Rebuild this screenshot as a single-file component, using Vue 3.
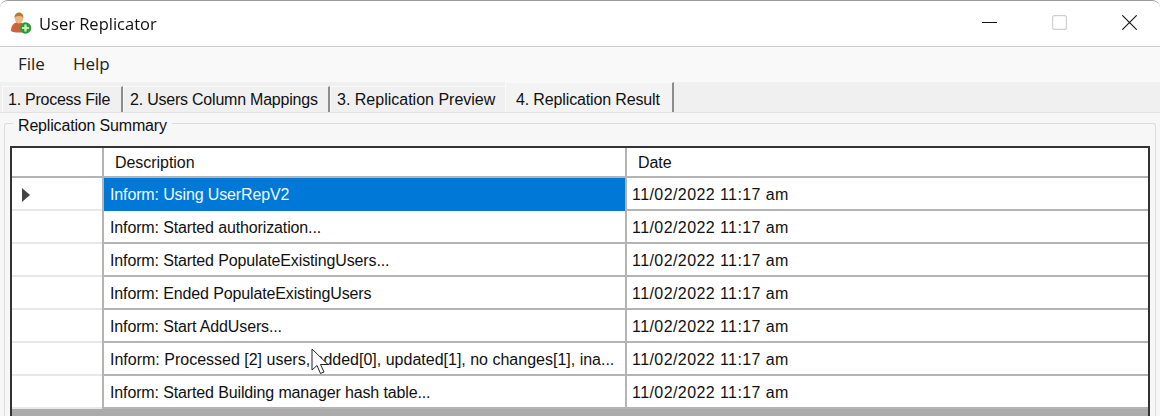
<script setup>
const tabs = [
  { label: '1. Process File', cls: 'w1' },
  { label: '2. Users Column Mappings', cls: 'w2' },
  { label: '3. Replication Preview', cls: 'w3' },
  { label: '4. Replication Result', cls: 'w4 active' }
]
const rows = [
  { text: 'Inform: Using UserRepV2', cls: '' },
  { text: 'Inform: Started authorization...', cls: '' },
  { text: 'Inform: Started PopulateExistingUsers...', cls: '' },
  { text: 'Inform: Ended PopulateExistingUsers', cls: '' },
  { text: 'Inform: Start AddUsers...', cls: '' },
  { text: 'Inform: Processed [2] users, added[0], updated[1], no changes[1], ina...', cls: 'long' },
  { text: 'Inform: Started Building manager hash table...', cls: '' }
]
</script>

<template>
  <div class="window">
    <header class="titlebar">
      <svg class="appicon" width="22" height="24" viewBox="0 0 22 24">
        <path d="M1 20c0-5.500 3-9 7.500-9s7.500 3.500 7.500 9c-3 2-12 2-15 0z" fill="#d2603a"/>
        <ellipse cx="9" cy="7.500" rx="4.200" ry="5" fill="#eab883"/>
        <path d="M4.600 7C4.300 3 7 1.500 9 1.500s4.700 1.500 4.400 5.500C12 5 10 5 9 5S6 5 4.600 7z" fill="#b9792f"/>
        <circle cx="15.500" cy="17" r="5.800" fill="#2f9e3f"/>
        <path d="M14 13h3v2.500h2.500v3H17V21h-3v-2.500h-2.500v-3H14z" fill="#bff0a8" stroke="#157a25" stroke-width=".6"/>
      </svg>
      <span class="title">User Replicator</span>
      <div class="controls">
        <svg width="15" height="15" viewBox="0 0 15 15"><path d="M0 7.500h15" stroke="#111" stroke-width="1"/></svg>
        <svg width="15" height="15" viewBox="0 0 15 15"><rect x=".6" y=".6" width="13.800" height="13.800" rx="2" fill="none" stroke="#cfcfcf" stroke-width="1.200"/></svg>
        <svg width="15" height="15" viewBox="0 0 15 15"><path d="M.3.300l14.400 14.400M14.700.300L.3 14.700" stroke="#111" stroke-width="1.100"/></svg>
      </div>
    </header>

    <nav class="menubar">
      <span>File</span>
      <span>Help</span>
    </nav>

    <div class="tabstrip">
      <div v-for="t in tabs" :key="t.label" class="tab" :class="t.cls">{{ t.label }}</div>
    </div>

    <section class="panel">
      <div class="group">
        <span class="legend">Replication Summary</span>
        <div class="grid">
          <div class="row head">
            <div class="rh"></div>
            <div class="cell hc desc">Description</div>
            <div class="cell hc">Date</div>
          </div>
          <div v-for="(r, i) in rows" :key="r.text" class="row">
            <div class="rh">
              <svg v-if="i === 0" width="8" height="14" viewBox="0 0 8 14"><path d="M0 0l8 7-8 7z" fill="#444"/></svg>
            </div>
            <div class="cell desc" :class="[r.cls, { selected: i === 0 }]">{{ r.text }}</div>
            <div class="cell date">11/02/2022 11:17 am</div>
          </div>
          <div class="empty"></div>
        </div>
      </div>
    </section>

    <svg class="cursor" width="20" height="28" viewBox="0 0 20 28">
      <path d="M1 1v21l5-4.500 3.500 8 3.500-1.500-3.500-7.500H17z" fill="#fff" stroke="#222" stroke-width="1"/>
    </svg>
  </div>
</template>

<style>
html, body { margin: 0; background: #fff; overflow: hidden; }
</style>

<style scoped>
.window {
  position: relative;
  width: 1160px;
  height: 416px;
  overflow: hidden;
  background: #f0f0f0;
  color: #111;
  font-family: "Liberation Sans", Arial, sans-serif;
  display: flex;
  flex-direction: column;
  border-top: 1px solid #9a9a9a;
  box-sizing: border-box;
  border-radius: 8px 8px 0 0;
  filter: blur(.3px);
}
.titlebar {
  height: 45px;
  flex: none;
  display: flex;
  align-items: center;
  background: #fff;
  border-bottom: 1px solid #cfcfcf;
  padding-left: 10px;
}
.appicon { margin-right: 7px; margin-top: -1px; }
.title {
  font-family: "Open Sans", "Noto Sans", sans-serif;
  font-size: 16.5px;
  color: #111;
}
.controls {
  margin-left: auto;
  display: flex;
  align-items: center;
  gap: 55px;
  padding-right: 23px;
  padding-bottom: 2px;
}
.controls svg { display: block; }
.menubar {
  height: 35px;
  flex: none;
  background: #f9f9f9;
  display: flex;
  align-items: center;
  gap: 28px;
  padding-left: 18px;
  padding-bottom: 2px;
  box-sizing: border-box;
  font-family: "Open Sans", "Noto Sans", sans-serif;
  font-size: 17px;
  color: #222;
}
.tabstrip {
  height: 31px;
  flex: none;
  display: flex;
  align-items: flex-end;
  background: #f0f0f0;
  padding-left: 2px;
  border-bottom: 1px solid #e2e2e2;
  box-sizing: border-box;
}
.tab {
  height: 26px;
  box-sizing: border-box;
  font-size: 16px;
  line-height: 26px;
  padding-left: 5px;
  background: #f0f0f0;
  border-left: 1px solid #fafafa;
  border-top: 1px solid #fafafa;
  border-right: 2px solid #8c8c8c;
  white-space: nowrap;
  flex: none;
  letter-spacing: -.2px;
}
.w1 { width: 121px; letter-spacing: -.25px; }
.w2 { width: 207px; padding-left: 6px; letter-spacing: -.22px; }
.w3 { width: 175px; padding-left: 6px; letter-spacing: 0; border-right: 0; }
.w4 { width: 169px; }
.tab.active {
  height: 30px;
  line-height: 33px;
  padding-left: 10px;
  background: #f3f3f3;
  letter-spacing: -.14px;
}
.panel {
  flex: 1;
  padding: 10px 4px 0;
  background: #f7f7f7;
  min-height: 0;
}
.group {
  position: relative;
  height: 100%;
  box-sizing: border-box;
  border: 1px solid #dcdcdc;
  border-bottom: 0;
  border-radius: 3px 3px 0 0;
  padding: 22px 5px 0 5px;
}
.legend {
  position: absolute;
  left: 8px;
  top: -7px;
  background: #f7f7f7;
  padding: 0 5px;
  font-size: 16px;
  line-height: 18px;
  letter-spacing: -.17px;
}
.grid {
  height: 100%;
  box-sizing: border-box;
  border: 2px solid #333;
  border-bottom: 0;
  background: #ababab;
  display: flex;
  flex-direction: column;
}
.row {
  display: grid;
  grid-template-columns: 92px 523px 1fr;
  height: 33px;
  flex: none;
  box-sizing: border-box;
  background: #fff;
  border-bottom: 2px solid #b4b4b4;
  font-size: 16px;
  line-height: 33px;
}
.row.head {
  height: 30px;
  line-height: 30px;
}
.rh {
  display: flex;
  align-items: center;
  padding-left: 10px;
  box-sizing: border-box;
  border-right: 2px solid #b4b4b4;
  box-shadow: inset 0 -2px 0 #e8e8e8;
  margin-bottom: -2px;
}
.head .rh { box-shadow: inset 0 -2px 0 #b4b4b4; }
.rh svg { display: block; }
.cell {
  padding-left: 6px;
  white-space: nowrap;
  overflow: hidden;
  letter-spacing: -.13px;
}
.cell.long { letter-spacing: 0; }
.cell.date { padding-left: 5px; letter-spacing: .42px; }
.cell.hc { padding-left: 11px; letter-spacing: -.05px; }
.desc { border-right: 2px solid #b4b4b4; margin-bottom: -2px; }
.selected {
  background: #0078d7;
  color: #f2f8fd;
}
.empty { flex: 1; background: #ababab; }
.cursor {
  position: absolute;
  left: 311px;
  top: 347px;
}
</style>
